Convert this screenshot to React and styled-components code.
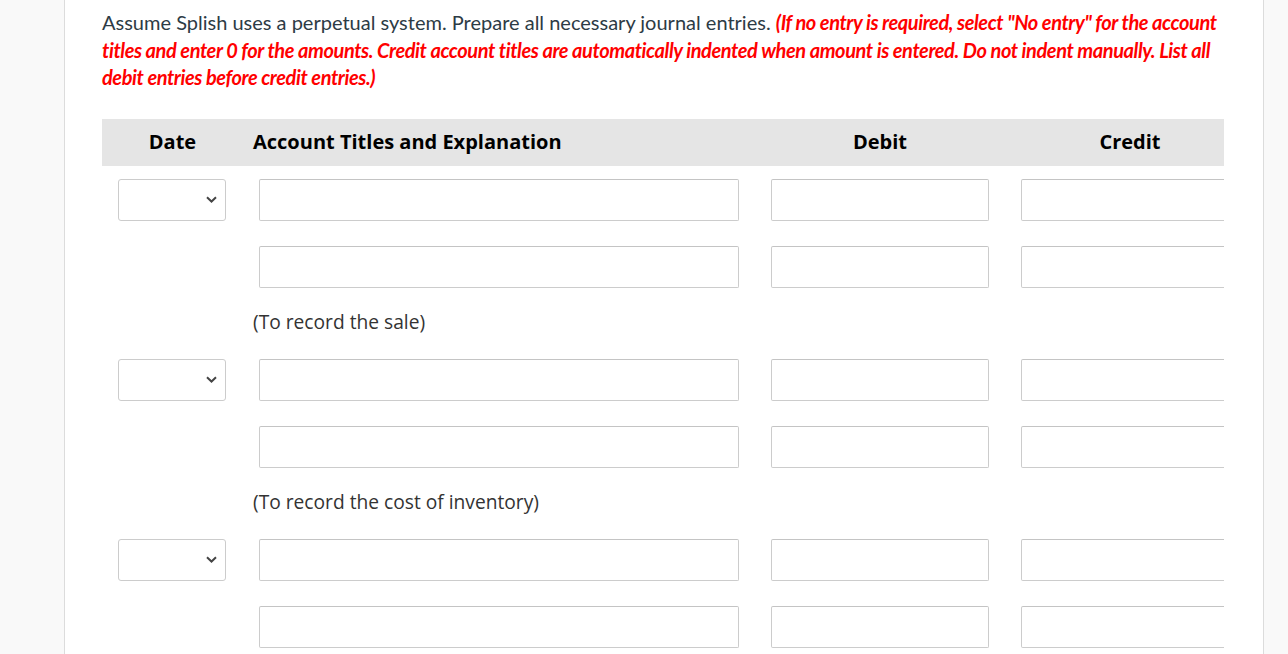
import React from "react";
import styled, { createGlobalStyle } from "styled-components";

const GlobalStyle = createGlobalStyle`
  html, body {
    margin: 0;
    padding: 0;
    background: #f9f9f9;
  }
  * {
    box-sizing: border-box;
  }
`;

const Page = styled.div`
  display: flex;
  min-height: 654px;
  padding-left: 64px;
  padding-right: 24px;
`;

const Panel = styled.div`
  flex: 1;
  background: #ffffff;
  border-left: 1px solid #dcdcdc;
  border-right: 1px solid #dcdcdc;
  padding: 9px 38px 0 37px;
  overflow: hidden;
`;

const Instructions = styled.p`
  margin: 0 0 27px 0;
  font-family: Lato, "Liberation Sans", sans-serif;
  font-size: 20px;
  line-height: 27.5px;
  color: #2d3b45;
  width: 1122px;
`;

const Warning = styled.span`
  color: #ff0000;
  font-style: italic;
  font-weight: 700;
  letter-spacing: -0.42px;
`;

const TableClip = styled.div`
  width: 1122px;
  overflow: hidden;
`;

const Table = styled.table`
  width: 1153px;
  border-collapse: collapse;
  table-layout: fixed;
  font-family: "Open Sans", "Noto Sans", sans-serif;
`;

const HeadCell = styled.th`
  background: #e5e5e5;
  height: 47px;
  padding: 0 10px 2px 10px;
  font-size: 20px;
  font-weight: 700;
  color: #000;
  text-align: ${(p) => p.$align || "center"};
  width: ${(p) => p.$w}px;
`;

const Cell = styled.td`
  padding: 13px 16px 12px 16px;
  vertical-align: top;
`;

const NoteCell = styled.td`
  height: 46px;
  padding: 0 10px 2px 10px;
  font-size: 19.2px;
  color: #333;
  vertical-align: middle;
`;

const SelectBox = styled.div`
  width: 108px;
  height: 42px;
  border: 1px solid #cccccc;
  border-radius: 3px;
  background: #fff;
  display: flex;
  align-items: center;
  justify-content: flex-end;
  padding-right: 8px;
`;

const Field = styled.div`
  width: ${(p) => p.$w}px;
  height: 42px;
  border: 1px solid #cccccc;
  border-top-color: #c4c4c4;
  border-radius: 2px;
  background: #fff;
`;

const Chevron = () => (
  <svg width="11" height="7" viewBox="0 0 11 7">
    <path d="M1 1.2 L5.5 5.5 L10 1.2" fill="none" stroke="#444" strokeWidth="2" />
  </svg>
);

const EntryRow = ({ withDate }) => (
  <tr>
    <Cell>{withDate && <SelectBox><Chevron /></SelectBox>}</Cell>
    <Cell><Field $w={480} /></Cell>
    <Cell><Field $w={218} /></Cell>
    <Cell><Field $w={218} /></Cell>
  </tr>
);

const entries = [
  { note: "(To record the sale)" },
  { note: "(To record the cost of inventory)" },
  { note: "" },
];

const App = () => {
  return (
    <>
      <GlobalStyle />
      <Page>
        <Panel>
          <Instructions>
            Assume Splish uses a perpetual system. Prepare all necessary journal entries.{" "}
            <Warning>
              (If no entry is required, select "No entry" for the account titles and enter 0 for the
              amounts. Credit account titles are automatically indented when amount is entered. Do not
              indent manually. List all debit entries before credit entries.)
            </Warning>
          </Instructions>
          <TableClip>
            <Table>
              <thead>
                <tr>
                  <HeadCell $w={141}>Date</HeadCell>
                  <HeadCell $w={512} $align="left">Account Titles and Explanation</HeadCell>
                  <HeadCell $w={250}>Debit</HeadCell>
                  <HeadCell $w={250}>Credit</HeadCell>
                </tr>
              </thead>
              <tbody>
                {entries.map((entry, i) => (
                  <React.Fragment key={i}>
                    <EntryRow withDate />
                    <EntryRow />
                    <tr>
                      <td />
                      <NoteCell>{entry.note}</NoteCell>
                      <td />
                      <td />
                    </tr>
                  </React.Fragment>
                ))}
              </tbody>
            </Table>
          </TableClip>
        </Panel>
      </Page>
    </>
  );
};

export default App;
